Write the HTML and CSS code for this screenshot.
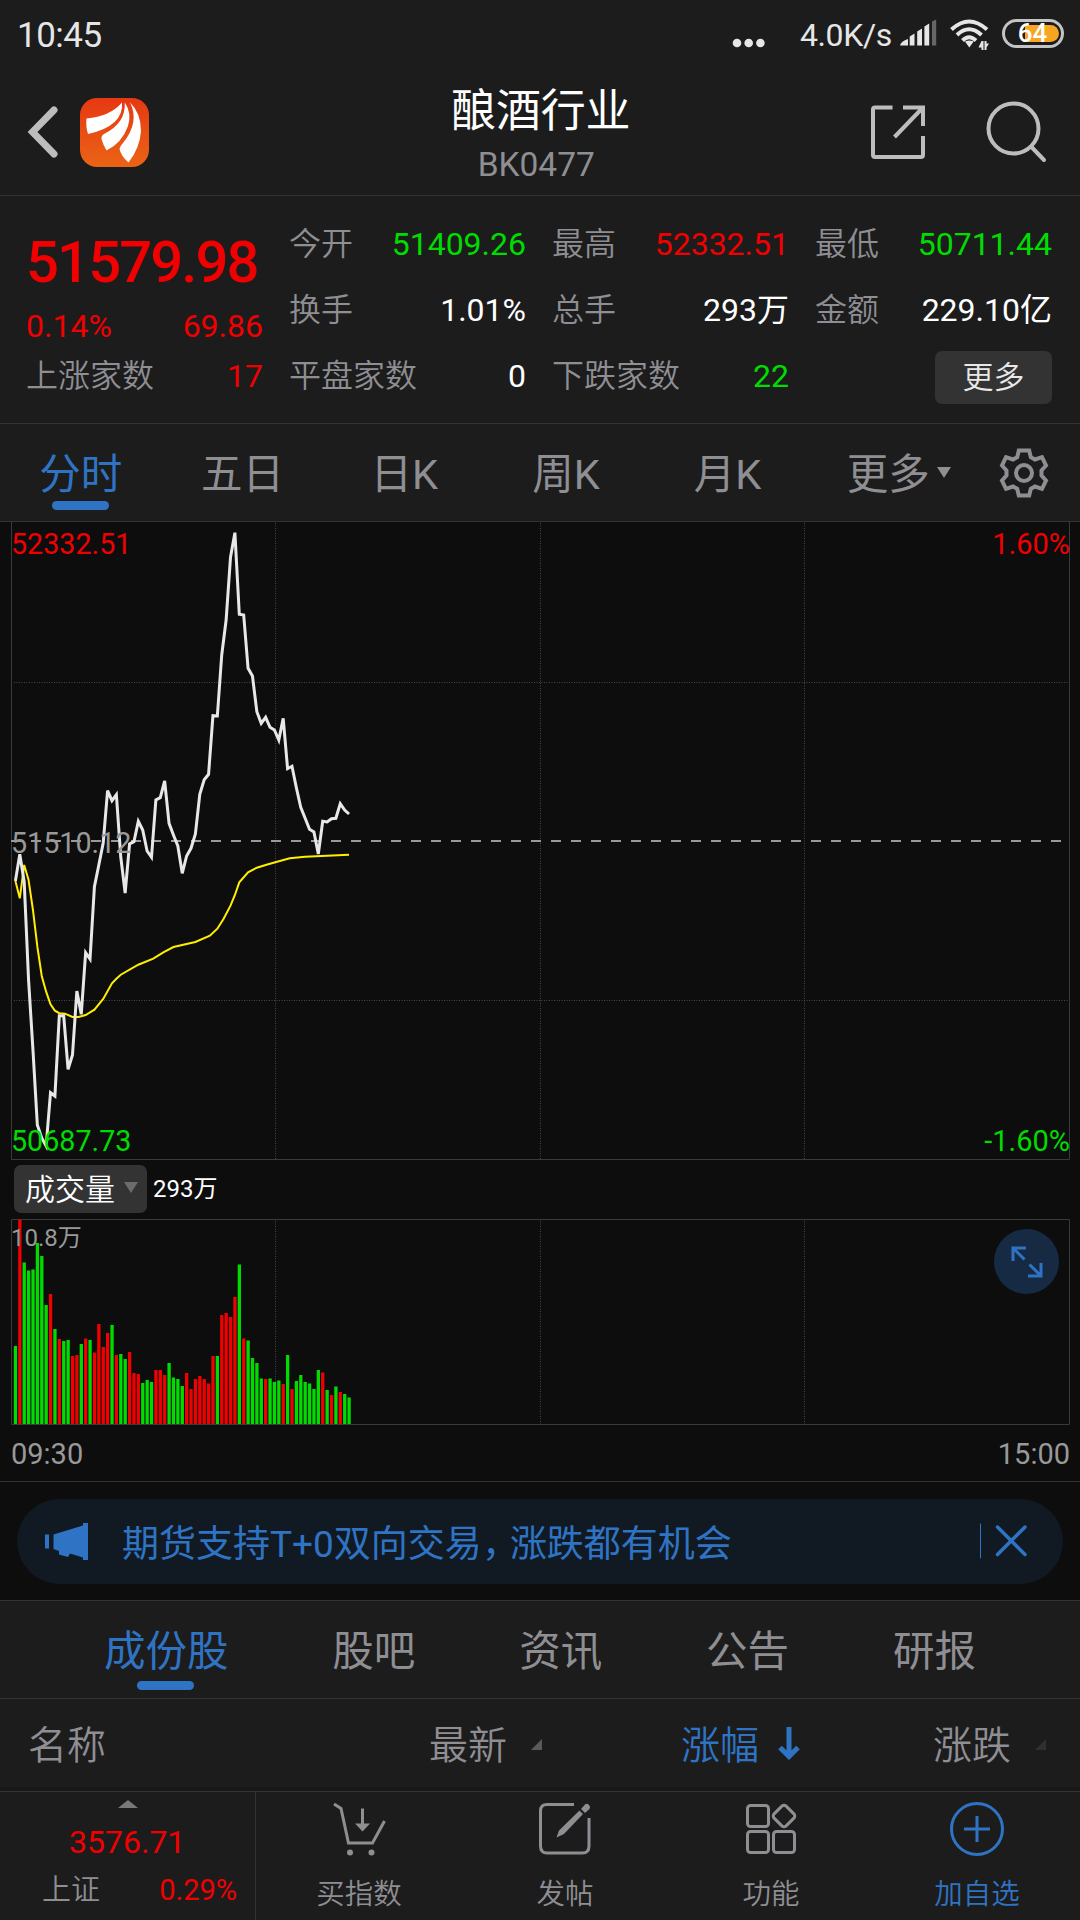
FILE: index.html
```html
<!DOCTYPE html>
<html lang="zh-CN">
	<head>
		<meta charset="utf-8">
		<title>酿酒行业 BK0477</title>
		<link rel="stylesheet" href="styles.css">
	</head>
	<body>
		<!-- 状态栏 -->
		<div class="status">
			<span class="time">10:45</span>
			<svg class="dots" width="34" height="10"><circle cx="5" cy="5" r="4.3"/><circle cx="16.7" cy="5" r="4.3"/><circle cx="28.4" cy="5" r="4.3"/></svg>
			<span class="speed">4.0K/s</span>
			<svg class="signal" width="38" height="28" viewBox="0 0 38 28">
				<path d="M0 26.5Q1 22 8 20V26.5ZM9.7 17.5L14.5 14.5V26.5H9.7ZM17.2 12.5L22 9.5V26.5H17.2ZM24.4 7.5L29.2 4.5V26.5H24.4Z"/>
				<path class="off" d="M32 2.5L36.2 0.5V26.5H32Z"/>
			</svg>
			<svg class="wifi" width="40" height="32" viewBox="0 0 40 32">
				<path d="M1.5 10.5Q19 -5.5 37 10.5M7 16Q19 4.500 31.500 16M12.500 21.500Q19 15 26 21.500"/>
				<path class="fill" d="M19.300 21.500q4 0 4 1.500l-4 5.500-4-5.500q0-1.500 4-1.500ZM31.500 22h2v9h-2v-2.500h-3ZM34.500 31v-9h2v2.500h2.500l-2.500 4v2.500Z"/>
			</svg>
			<div class="battery"><i></i><b>64</b></div>
		</div>

		<header>
			<svg class="back" width="32" height="54" viewBox="0 0 32 54"><path d="M27 5L5.500 27L27 49"/></svg>
			<svg class="logo" width="69" height="69" viewBox="0 0 69 69">
				<defs><linearGradient id="lg" x2="0" y2="1"><stop offset="0" stop-color="#e73812"/><stop offset="1" stop-color="#ea6415"/></linearGradient></defs>
				<rect width="69" height="69" rx="17" fill="url(#lg)"/>
				<path fill="#fff" d="M6.500 20.500Q30 18.500 42 4.500Q44 28 8 36Q5.500 28 6.500 20.500ZM44.800 4.500Q52 15 48 28Q42 45 26.500 52.500Q23.500 48 21.500 41Q21 38 24 36Q46 25 44.800 4.500ZM50 4.500Q61 15 61 33Q60 50 48.500 64.500Q41 58 39.500 51Q40 48 43 45Q60 24 50 4.500Z"/>
			</svg>
			<div class="title">
				<h1>酿酒行业</h1>
				<p>BK0477</p>
			</div>
			<svg class="share" width="56" height="56" viewBox="0 0 56 56"><path d="M22.500 3.500H5Q3 3.500 3 5.500V51Q3 53 5 53H51Q53 53 53 51V32M33 3.500H53V22M53 3.500L24.500 33"/></svg>
			<svg class="search" width="62" height="62" viewBox="0 0 62 62"><circle cx="27.500" cy="27.500" r="25"/><path d="M45.500 46L58 59"/></svg>
		</header>

		<!-- 行情 -->
		<section class="quote">
			<div class="col">
				<div class="price red">51579.98</div>
				<div class="change red"><span>0.14%</span><span>69.86</span></div>
				<dl><dt>上涨家数</dt><dd class="red">17</dd></dl>
			</div>
			<div class="col">
				<dl><dt>今开</dt><dd class="green">51409.26</dd></dl>
				<dl><dt>换手</dt><dd>1.01%</dd></dl>
				<dl><dt>平盘家数</dt><dd>0</dd></dl>
			</div>
			<div class="col">
				<dl><dt>最高</dt><dd class="red">52332.51</dd></dl>
				<dl><dt>总手</dt><dd>293万</dd></dl>
				<dl><dt>下跌家数</dt><dd class="green">22</dd></dl>
			</div>
			<div class="col">
				<dl><dt>最低</dt><dd class="green">50711.44</dd></dl>
				<dl><dt>金额</dt><dd>229.10亿</dd></dl>
				<div class="more"><button>更多</button></div>
			</div>
		</section>

		<nav class="periods">
			<a class="active">分时</a>
			<a>五日</a>
			<a>日K</a>
			<a>周K</a>
			<a>月K</a>
			<a class="others">更多<svg class="caret" width="14" height="11"><path d="M0 0H14L7 11Z"/></svg></a>
			<svg class="gear" width="50" height="50" viewBox="-25 -25 50 50">
				<path d="M-5.200 -22.500H5.200L6.800 -15.800L11 -13.500L18 -15.800L22 -7.500L17.500 -2.500V2.500L22 7.500L18 15.800L11 13.500L6.800 15.800L5.200 22.500H-5.200L-6.800 15.800L-11 13.500L-18 15.800L-22 7.500L-17.500 2.500V-2.500L-22 -7.500L-18 -15.800L-11 -13.500L-6.800 -15.800Z"/>
				<circle r="8"/>
			</svg>
		</nav>

		<!-- 分时图 -->
		<svg class="chart" width="1080" height="638" viewBox="0 522 1080 638">
			<path class="frame" d="M11.500 521V1159.500H1069.500V521"/>
			<path class="grid" d="M275.500 523V1159M540.500 523V1159M804.500 523V1159M14 682.500H1069M14 1000.500H1069"/>
			<path class="mid" d="M11 841H1065"/>
			<polyline class="avg" points=""/>
			<polyline class="line" points=""/>
			<text class="red" x="11" y="554">52332.51</text>
			<text x="11" y="853">51510.12</text>
			<text class="green" x="11" y="1151">50687.73</text>
			<text class="red end" x="1070" y="554">1.60%</text>
			<text class="green end" x="1070" y="1151">-1.60%</text>
		</svg>

		<div class="indicator">
			<button>成交量<svg class="caret" width="14" height="11"><path d="M0 0H14L7 11Z"/></svg></button>
			<span>293万</span>
		</div>

		<div class="volume">
			<svg class="chart" width="1080" height="207" viewBox="0 1219 1080 207">
				<path class="frame" d="M11.500 1219.500H1069.500V1424.500H11.500Z"/>
				<path class="grid" d="M275.500 1221V1424M540.500 1221V1424M804.500 1221V1424"/>
				<g class="bars"></g>
				<text class="small" x="11" y="1246">10.8万</text>
			</svg>
			<div class="expand">
				<svg width="32" height="32" viewBox="0 0 32 32"><path d="M2 15V2H15M2 2L13.500 13.500M30 17V30H17M30 30L18.500 18.500"/></svg>
			</div>
		</div>
		<div class="hours"><span>09:30</span><span>15:00</span></div>

		<div class="notice">
			<div class="pill">
				<svg class="horn" width="43" height="37" viewBox="0 0 43 37"><path d="M0 11.500H4V25.500H0ZM8.500 11.500L38 2.500V0H43V37H38V34.500L25 30.500L23 34L14 31.500V28L8.500 26Z"/></svg>
				<p>期货支持T+0双向交易<span class="comma">，</span>涨跌都有机会</p>
				<svg class="close" width="48" height="36" viewBox="0 0 48 36"><path class="bar" d="M1.500 1V35"/><path d="M18.500 4L46 31.500M46 4L18.500 31.500"/></svg>
			</div>
		</div>

		<nav class="sections">
			<a class="active">成份股</a>
			<a>股吧</a>
			<a>资讯</a>
			<a>公告</a>
			<a>研报</a>
		</nav>

		<div class="sort">
			<span class="name">名称</span>
			<span class="latest">最新<svg width="11" height="11"><path d="M11 0V11H0Z"/></svg></span>
			<span class="rate">涨幅<svg width="22" height="34" viewBox="0 0 22 34"><path d="M11 0V29M2 20.500L11 29.500L20 20.500"/></svg></span>
			<span class="diff">涨跌<svg width="11" height="11"><path d="M11 0V11H0Z"/></svg></span>
		</div>

		<footer>
			<div class="index">
				<svg width="20" height="8"><path d="M0 8L10 0L20 8Z"/></svg>
				<div class="red point">3576.71</div>
				<div class="pair"><span>上证</span><span class="red">0.29%</span></div>
			</div>
			<a>
				<svg width="56" height="56" viewBox="0 0 56 56">
					<path d="M3 3L10 7.500L17.500 42H41.500L53.500 20M31.500 7.500V24"/>
					<path class="fill" d="M24 22.500H39L31.500 30.500Z"/><circle class="fill" cx="19" cy="51.500" r="3"/><circle class="fill" cx="40.500" cy="51.500" r="3"/>
				</svg>
				<span>买指数</span>
			</a>
			<a>
				<svg width="56" height="56" viewBox="0 0 56 56">
					<path d="M37 3.500H10Q3.500 3.500 3.500 10V45Q3.500 52 10 52H45.500Q52 52 52 45V17"/>
					<path class="fill" d="M42.500 9.500L46 13L27 33L19.500 36.500L22 29.500ZM44 8L48 3.500Q50 2 52 4Q54 6 52.500 8L48 12Z"/>
				</svg>
				<span>发帖</span>
			</a>
			<a>
				<svg width="56" height="56" viewBox="0 0 56 56">
					<rect x="4.500" y="4.500" width="21" height="21" rx="3"/><rect x="4.500" y="30.500" width="21" height="21" rx="3"/><rect x="30.500" y="30.500" width="21" height="21" rx="3"/>
					<rect x="32.500" y="6.500" width="17" height="17" rx="3" transform="rotate(45 41 15)"/>
				</svg>
				<span>功能</span>
			</a>
			<a class="add">
				<svg width="56" height="56" viewBox="0 0 56 56"><circle cx="28" cy="28" r="25.500"/><path d="M28 15V41M15 28H41"/></svg>
				<span>加自选</span>
			</a>
		</footer>

		<script>
			// 每分钟一个点，全天 241 个点
			const x = i => 15.4 + 4.39 * i;

			const price = [
				881, 854.3, 881.7, 980, 1050, 1125, 1138, 1146, 1092.7, 1096, 1015.7, 1015.7, 1069.3, 1055, 991, 1014.3,
				952.7, 959, 886.7, 865, 843, 790.7, 800.7, 794.7, 857, 893, 844, 841.7, 821.3, 830, 851, 857.3,
				800, 797.7, 781, 823.3, 835, 846, 873.3, 856, 848.3, 834, 794.3, 779.7, 774.3, 715.7, 716, 655,
				620, 557.3, 532.7, 614.3, 615, 668.3, 676, 711.7, 723.3, 717.3, 727.3, 730, 740, 718.3, 768.7, 766.3,
				787.7, 807.3, 818.3, 829.3, 832, 854, 821.3, 822, 818.7, 818.3, 803.7, 810, 814
			];
			document.querySelector('.line').setAttribute('points', price.map((y, i) => `${x(i)},${y}`).join(' '));

			// 均价 [第几分钟, y]
			const avg = [
				[0, 881], [1, 898.3], [2, 865], [3, 880], [4, 910], [5, 946.7], [6, 976], [7, 991.7], [8, 1004.3], [9, 1010.7],
				[10, 1013.2], [11.3, 1013.7], [13, 1017], [14.4, 1017], [16, 1015], [18, 1009.7], [20, 999], [22, 983.3],
				[23, 978.7], [24, 974.7], [28, 964.7], [31.4, 958.7], [33.7, 952.3], [36, 947], [41, 942], [44.3, 935.7],
				[46, 928.7], [47.4, 919], [49, 905.7], [50, 895], [51, 882.3], [53, 872.3], [55, 867.7], [57.2, 864.7],
				[59.2, 862.3], [62.5, 858.3], [66, 856.7], [71, 855.7], [76, 854.7]
			];
			document.querySelector('.avg').setAttribute('points', avg.map(([i, y]) => `${x(i)},${y}`).join(' '));

			// 成交量柱，r 涨 g 跌
			const volume = 'g78 r204.5 g161.5 g153.5 g154.5 g181 g168 g119 r130 g95 r85 g83 g84 r68 r69 g80 r85.5 g84 r71.5 r100 r77 r91 g99 r69 g70 g65 r72 r51 r50 g41 g44 g42 r54 r54 r49 g61 g46.5 g45 g38 r51 r35 r45 r48 r45 r40.5 r68 g68 r109 r111 r107 r127 g159.5 r85.5 g83.5 g66 g61 g45.5 r45 g45.5 g42 g43.5 r40 g69 r35 g43 g49 g42 g40.5 g35 g54 r51.5 g34 r29 g37.5 r32 g30 g26.5';
			document.querySelector('.bars').innerHTML = volume.split(' ').map((v, i) => {
				const h = +v.slice(1);
				return `<rect class="${v[0]}" x="${x(i) - 1.6}" y="${1424 - h}" width="3.3" height="${h}"/>`;
			}).join('');
		</script>
	</body>
</html>
```
FILE: styles.css
```css
* {
	box-sizing: border-box;
}

body {
	--bg: #1c1c1c;
	--dark: #0d0d0d;
	--border: #333;
	--gray: #8e8e93;
	--blue: #2f74c4;
	--red: #f00000;
	--green: #00dc00;
	margin: 0;
	width: 1080px;
	height: 1920px;
	overflow: hidden;
	background: var(--dark);
	color: #fff;
	font: 32px/1 Roboto, "Noto Sans CJK SC", sans-serif;
}

h1, p, dl, dd {
	margin: 0;
	font-weight: normal;
}

svg {
	display: block;
	flex: none;
	fill: none;
}

button {
	border: 0;
	border-radius: 7px;
	background: #333;
	color: #e8e8e8;
	font: inherit;
	font-weight: 350;
}

.red {
	color: var(--red);
	fill: var(--red);
}

.green {
	color: var(--green);
	fill: var(--green);
}

/* 状态栏 */
.status {
	display: flex;
	align-items: center;
	height: 70px;
	padding: 0 16px 0 17px;
	background: var(--bg);
	color: #e6e6e6;
}

.status svg {
	fill: #e6e6e6;
}

.time {
	flex: 1;
	font-size: 35px;
	letter-spacing: -0.5px;
}

.status .dots {
	margin: 15px 34px 0 0;
}

.speed {
	width: 100px;
	letter-spacing: -0.4px;
}

.signal {
	margin: -5px 12px 0 0;
}

.status .signal .off {
	fill: #666;
}

.wifi {
	margin: -1px 12px 0 0;
}

.status .wifi path {
	fill: none;
	stroke: #e6e6e6;
	stroke-width: 4;
}

.status .wifi .fill {
	fill: #e6e6e6;
	stroke: none;
}

.battery {
	position: relative;
	width: 62px;
	height: 29px;
	margin-top: -3px;
	border: 3px solid #c4c4c4;
	border-radius: 15px;
}

.battery i {
	position: absolute;
	left: 20px;
	top: 3px;
	width: 34px;
	height: 17px;
	border-radius: 0 9px 9px 0;
	background: #f6a623;
}

.battery b {
	position: absolute;
	left: 0;
	right: 1px;
	top: -2px;
	text-align: center;
	color: #fff;
	font-size: 26px;
	font-weight: 500;
}

/* 标题 */
header {
	display: flex;
	align-items: center;
	height: 126px;
	padding: 0 32px 2px 27px;
	border-bottom: 1px solid var(--border);
	background: var(--bg);
}

.back, .share, .search {
	stroke: #bdbdbd;
	stroke-width: 4;
}

.back {
	stroke-width: 7;
	stroke-linecap: round;
}

.logo {
	margin: 1px 0 0 20.500px;
}

.title {
	flex: 1;
	padding: 11px 0 0 63px;
	text-align: center;
}

.title h1 {
	font-size: 45px;
	line-height: 54px;
	letter-spacing: -0.3px;
}

.title p {
	padding-right: 9px;
	color: var(--gray);
	font-size: 33.500px;
	line-height: 51px;
}

.search {
	margin: 0 0 0 60px;
	stroke-linecap: round;
}

/* 行情 */
.quote {
	display: grid;
	grid-template-columns: repeat(4, 237px);
	gap: 26px;
	height: 228px;
	padding: 15px 26px 0;
	border-bottom: 1px solid var(--border);
	background: var(--bg);
}

.quote dl, .change {
	display: flex;
	justify-content: space-between;
	height: 66px;
	line-height: 66px;
}

.quote dt {
	color: var(--gray);
	font-weight: 350;
}

.price {
	height: 100px;
	font-size: 58px;
	font-weight: 500;
	line-height: 103px;
	letter-spacing: -1.9px;
}

.quote .change {
	height: 32px;
	line-height: 31px;
}

.more {
	display: flex;
	justify-content: flex-end;
	padding-top: 8px;
}

.more button {
	width: 117px;
	height: 53px;
	font-size: 31px;
}

/* 周期切换 */
.periods {
	display: flex;
	align-items: center;
	height: 98px;
	border-bottom: 1px solid var(--border);
	background: var(--bg);
}

.periods a {
	display: flex;
	align-items: center;
	justify-content: center;
	width: 161.7px;
	padding-top: 4px;
}

.periods a, .sections a {
	position: relative;
	height: 100%;
	color: var(--gray);
	font-size: 41.500px;
	line-height: 98px;
}

.periods .others {
	padding-left: 19px;
}

nav .active.active {
	color: var(--blue);
}

nav .active::after {
	content: "";
	position: absolute;
	left: calc(50% - 29px);
	bottom: 11px;
	width: 57px;
	height: 9px;
	border-radius: 5px;
	background: var(--blue);
}

.caret {
	margin-left: 7px;
	fill: var(--gray);
}

.periods .caret {
	margin-top: -5px;
}

.gear {
	margin: 1px 0 0 29px;
	stroke: var(--gray);
	stroke-width: 4;
}

/* 图表 */
.chart .frame {
	stroke: #3a3a3a;
}

.chart .grid {
	stroke: #484848;
	stroke-dasharray: 1 1.5;
}

.chart .mid {
	stroke: #999;
	stroke-width: 2;
	stroke-dasharray: 10 10;
}

.chart .line {
	stroke: #e8e8e8;
	stroke-width: 3;
}

.chart .avg {
	stroke: #ffee00;
	stroke-width: 2;
}

.chart text {
	font-size: 28.700px;
}

.chart text:not(.red):not(.green) {
	fill: #999;
}

.chart .end {
	font-size: 29px;
	text-anchor: end;
}

.chart .small {
	font-size: 24px;
}

.r {
	fill: var(--red);
}

.g {
	fill: var(--green);
}

.indicator {
	display: flex;
	align-items: center;
	height: 59px;
	padding: 0 14px 1px;
	font-size: 24px;
}

.indicator button {
	display: flex;
	align-items: center;
	width: 133px;
	height: 48px;
	margin-right: 6px;
	padding: 1px 0 0 11px;
	color: #fff;
	font-size: 30px;
}

.indicator .caret {
	margin: -4px 0 0 9px;
	fill: #6c6c6c;
}

.volume {
	position: relative;
}

.expand {
	position: absolute;
	right: 21px;
	top: 10px;
	display: flex;
	align-items: center;
	justify-content: center;
	width: 65px;
	height: 65px;
	border-radius: 50%;
	background: #172a43;
	stroke: var(--blue);
	stroke-width: 3;
}

.hours {
	display: flex;
	justify-content: space-between;
	height: 56px;
	padding: 0 10px 0 11px;
	border-bottom: 1px solid var(--border);
	color: #999;
	font-size: 29px;
	line-height: 57px;
}

/* 公告条 */
.notice {
	height: 119px;
	padding: 17px 17px 0;
	border-bottom: 1px solid var(--border);
}

.pill {
	display: flex;
	align-items: center;
	height: 85px;
	padding: 0 36px 0 28px;
	border-radius: 43px;
	background: #111a23;
	color: var(--blue);
}

.horn {
	fill: var(--blue);
}

.pill p {
	flex: 1;
	padding: 5px 0 0 34px;
	font-size: 37px;
}

.comma {
	letter-spacing: -9px;
}

.close {
	margin-top: -1px;
	stroke: var(--blue);
	stroke-width: 3.500;
	stroke-linecap: round;
}

.close .bar {
	stroke-width: 1;
}

/* 栏目 */
.sections {
	display: flex;
	justify-content: space-evenly;
	height: 98px;
	border-bottom: 1px solid var(--border);
	background: var(--bg);
}

.sections a {
	line-height: 102px;
}

.sections .active::after {
	bottom: 8px;
}

.sort {
	display: grid;
	grid-template-columns: 401px 252px 252px 1fr;
	align-items: center;
	height: 93px;
	padding: 2px 0 0 28px;
	border-bottom: 1px solid var(--border);
	background: linear-gradient(var(--bg) 88px, #181818 88px);
	color: var(--gray);
	font-size: 39px;
	font-weight: 350;
}

.sort span {
	display: flex;
	align-items: center;
}

.sort svg {
	margin-top: -4px;
}

.sort .latest svg {
	margin-left: 24px;
	fill: #5a5a5c;
}

.sort .rate {
	color: var(--blue);
}

.sort .rate svg {
	margin-left: 19px;
	stroke: var(--blue);
	stroke-width: 5;
}

.sort .diff svg {
	margin-left: 24px;
	fill: #303030;
}

/* 底部 */
footer {
	display: flex;
	height: 128px;
	background: var(--bg);
	color: var(--gray);
}

.index {
	width: 256px;
	padding: 8px 18px 0 42px;
	border-right: 1px solid var(--border);
}

.index svg {
	margin-left: 76px;
	fill: #77777c;
}

.point {
	padding: 18px 0 0 27px;
}

.pair {
	display: flex;
	justify-content: space-between;
	padding-top: 17px;
	font-size: 29px;
	font-weight: 350;
	line-height: 30px;
}

.pair .red {
	font-weight: 400;
}

footer a {
	display: flex;
	flex: 1;
	flex-direction: column;
	align-items: center;
	padding-top: 9px;
	font-size: 28.500px;
	font-weight: 350;
}

footer a svg {
	margin-bottom: 24px;
	stroke: var(--gray);
	stroke-width: 3;
}

footer a .fill {
	fill: var(--gray);
	stroke: none;
}

footer .add {
	color: var(--blue);
}

footer .add svg {
	stroke: var(--blue);
}
```
